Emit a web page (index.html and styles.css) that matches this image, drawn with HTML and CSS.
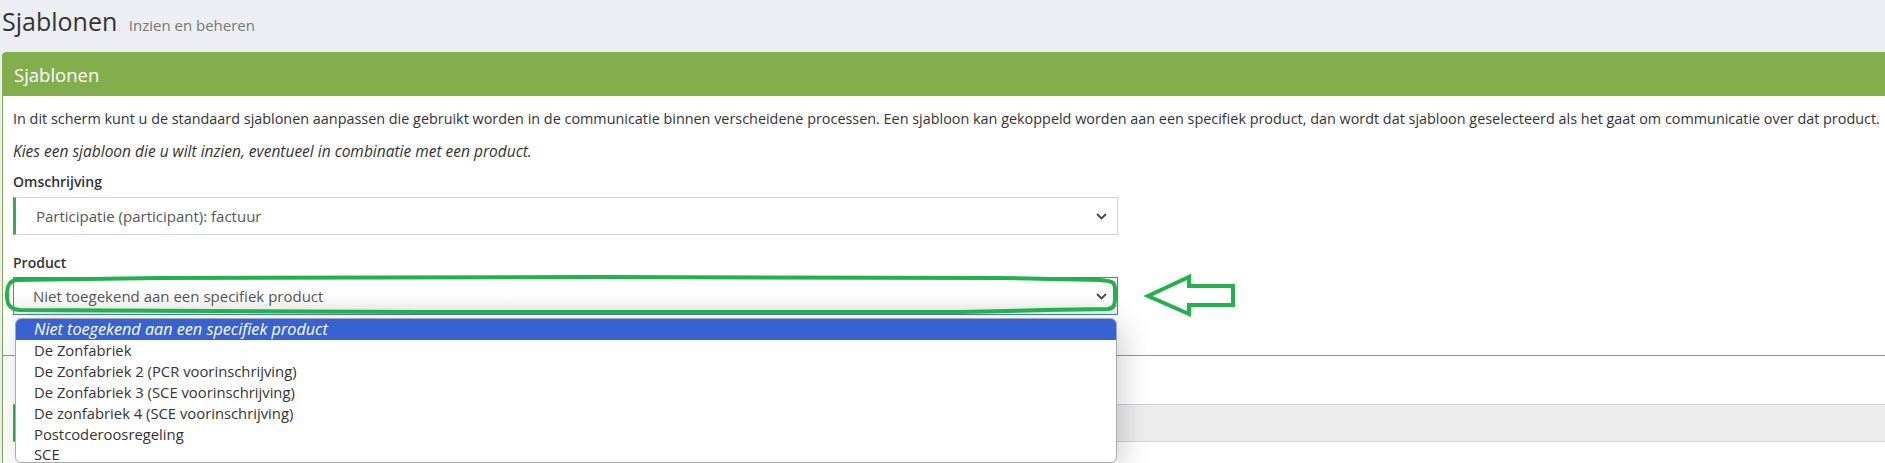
FILE: index.html
```html
<!DOCTYPE html>
<html>

  <head>
    <title>Sjablonen</title>
    <link rel="stylesheet" href="styles.css">
  </head>

  <body>
    <div class="page-header">
      <h1>Sjablonen <small>Inzien en beheren</small></h1>
    </div>

    <div class="card">
      <div class="card-heading">Sjablonen</div>

      <div class="card-body">
        <p>In dit scherm kunt u de standaard sjablonen aanpassen die gebruikt worden in de communicatie binnen verscheidene processen. Een sjabloon kan gekoppeld worden aan een specifiek product, dan wordt dat sjabloon geselecteerd als het gaat om communicatie over dat product.</p>
        <p class="hint">Kies een sjabloon die u wilt inzien, eventueel in combinatie met een product.</p>

        <div class="field">
          <label>Omschrijving</label>
          <div class="select select-valid">
            <span>Participatie (participant): factuur</span>
            <svg class="chevron" width="11" height="7" viewBox="0 0 11 7"><path d="M1 1 L5.5 5.5 L10 1" fill="none" stroke="#444" stroke-width="1.8"/></svg>
          </div>
        </div>

        <div class="field field-product">
          <label>Product</label>
          <div class="select select-focus">
            <span>Niet toegekend aan een specifiek product</span>
            <svg class="chevron" width="11" height="7" viewBox="0 0 11 7"><path d="M1 1 L5.5 5.5 L10 1" fill="none" stroke="#444" stroke-width="1.8"/></svg>
          </div>

          <!-- opened native list -->
          <div class="dropdown">
            <div class="option selected">Niet toegekend aan een specifiek product</div>
            <div class="option">De Zonfabriek</div>
            <div class="option">De Zonfabriek 2 (PCR voorinschrijving)</div>
            <div class="option">De Zonfabriek 3 (SCE voorinschrijving)</div>
            <div class="option">De zonfabriek 4 (SCE voorinschrijving)</div>
            <div class="option">Postcoderoosregeling</div>
            <div class="option last">SCE</div>
          </div>
        </div>
      </div>

      <div class="card-footer">
        <div class="toolbar"></div>
      </div>
    </div>

    <!-- hand drawn annotation -->
    <svg class="annotation" width="1885" height="463" viewBox="0 0 1885 463">
      <path d="M16 280 C9 281 7 286 7 295 C7 304 9 309 20 310 L420 312 L960 312 L1045 310 L1108 309 C1115 308 1115 304 1115 296 L1115 289 C1115 282 1112 281 1100 280 L1000 278 L600 277 L160 278 Z"
        fill="none" stroke="#22b14c" stroke-width="4" stroke-linejoin="round"/>
      <polygon points="1148,296 1189,277 1189,286 1233,286 1233,305 1189,305 1189,314"
        fill="none" stroke="#22b14c" stroke-width="4" stroke-linejoin="miter"/>
    </svg>
  </body>

</html>
```

FILE: styles.css
```css
body {
  margin: 0;
  background-color: #eceef3;
  font-family: "Open Sans", Lato, sans-serif;
  font-size: 14px;
  color: #333;
  overflow: hidden;
  position: relative;
  height: 463px;
}


.page-header {
  height: 52px;
  padding-left: 2px;
}

.page-header h1 {
  margin: 0;
  padding-top: 3px;
  font-size: 25px;
  font-weight: 400;
  line-height: 36px;
  color: #333;
}

.page-header small {
  font-size: 15px;
  color: #777;
  margin-left: 5px;
}


.card {
  margin-left: 2px;
  margin-right: -20px;
  border: 1px solid #82ae4c;
  border-radius: 4px 4px 0 0;
  background-color: #fff;
  height: 420px;
}

.card-heading {
  background-color: #82ae4c;
  color: #fff;
  height: 43px;
  line-height: 44px;
  padding-left: 11px;
  font-size: 18.5px;
}

.card-body {
  padding: 13px 10px 40px 10px;
}

.card-body p {
  margin: 0 0 12px 0;
  font-size: 14.4px;
  line-height: 20px;
}

.card-body p.hint {
  font-style: italic;
  font-size: 15.5px;
  margin-bottom: 11px;
}


.field {
  margin-bottom: 18px;
}

.field-product {
  position: relative;
  margin-bottom: 0;
}

.field label {
  display: block;
  font-weight: 600;
  line-height: 20px;
  margin-bottom: 5px;
}

.field-product label {
  margin-bottom: 4px;
}

.select {
  box-sizing: border-box;
  width: 1105px;
  height: 38px;
  display: flex;
  align-items: center;
  justify-content: space-between;
  border: 1px solid #d3d3db;
  color: #555;
  font-size: 15px;
  padding: 0 8px 0 19px;
  background-color: #fff;
}

.select-valid {
  border-left: 3px solid #3ea84a;
  padding-left: 20px;
  font-size: 15px;
}

.select-focus {
  border-color: #4a7fc6;
  background: linear-gradient(#fff 45%, #ececec);
}

.chevron {
  margin-right: 2px;
}


.dropdown {
  position: absolute;
  top: 65px;
  left: 2px;
  width: 1102px;
  height: 145px;
  box-sizing: border-box;
  overflow: hidden;
  background-color: #fff;
  border: 1px solid #a9a9a9;
  border-radius: 6px;
  box-shadow: 6px 6px 30px rgba(0, 0, 0, 0.18);
  z-index: 2;
}

.option {
  height: 21px;
  line-height: 21px;
  padding-left: 18px;
  font-size: 14.8px;
  color: #333;
}

.option.selected {
  background-color: #3662d3;
  color: #fff;
  font-style: italic;
  font-size: 16.2px;
}

.option.last {
  height: 18px;
  line-height: 18px;
}


.card-footer {
  border-top: 1px solid #82ae4c;
  padding-top: 48px;
}

.toolbar {
  margin-left: 10px;
  height: 36px;
  background-color: #ededed;
  border-top: 1px solid #d3d3dc;
  border-bottom: 1px solid #d3d3dc;
  border-left: 3px solid #3ea84a;
}


.annotation {
  position: absolute;
  top: 0;
  left: 0;
  pointer-events: none;
  z-index: 3;
}
```
